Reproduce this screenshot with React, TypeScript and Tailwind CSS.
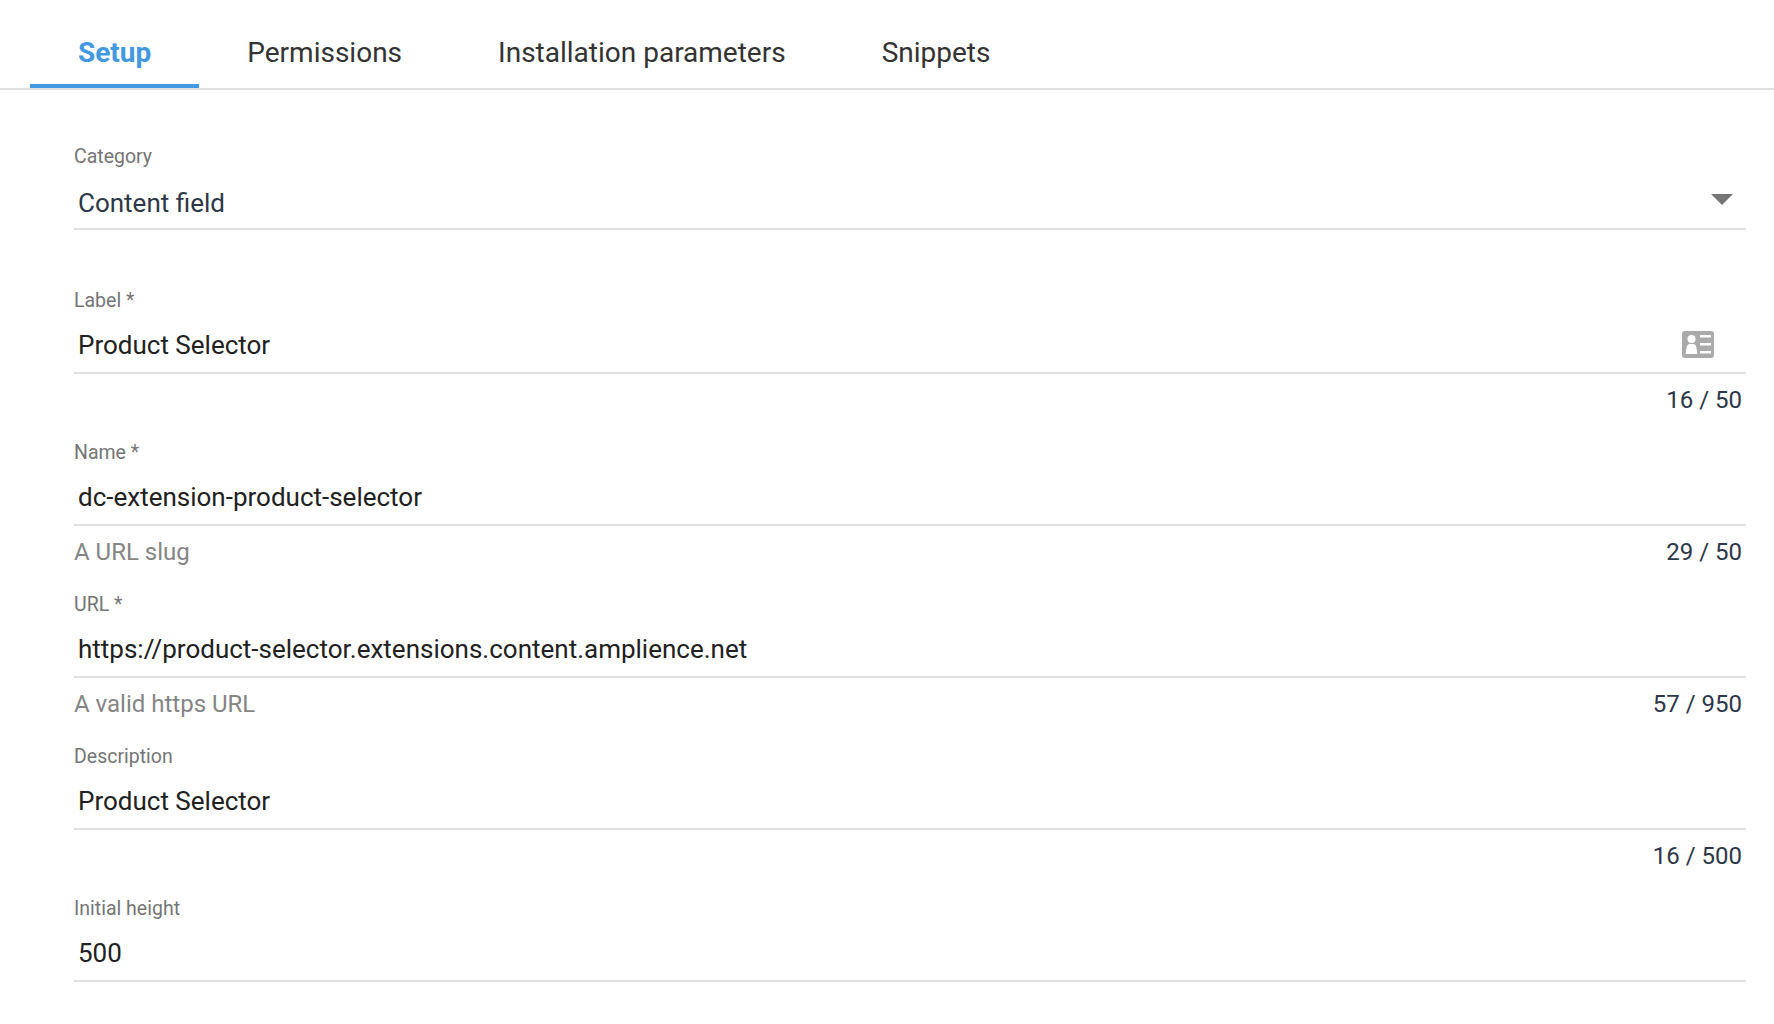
const tabs = ["Setup", "Permissions", "Installation parameters", "Snippets"];

function Field({
  label,
  value,
  helper,
  count,
  select,
  trailing,
}: {
  label: string;
  value: string;
  helper?: string;
  count?: string;
  select?: boolean;
  trailing?: React.ReactNode;
}) {
  return (
    <div>
      <div className="h-6 text-[19.5px] leading-[26px] text-[#757575]">{label}</div>
      <div className="h-[60px] flex items-end border-b-2 border-[#e0e0e0] box-content">
        <div
          className={`flex w-full items-center justify-between pl-[4px] ${select ? "h-[50px]" : "h-[54px]"}`}
        >
          <span className={`text-[26px] ${select ? "text-[#2d3748]" : "text-[#212121]"}`}>{value}</span>
          {trailing}
        </div>
      </div>
      {count && (
        <div className="flex h-[52px] items-center justify-between pr-[4px] text-[24px]">
          <span className="text-[#858585]">{helper}</span>
          <span className="text-[#2d3748]">{count}</span>
        </div>
      )}
    </div>
  );
}

export default function App() {
  return (
    <div className="min-h-screen bg-white font-['Roboto',sans-serif]">
      <div className="flex h-[90px] border-b-2 border-[#e0e0e0] pl-[30px]">
        {tabs.map((t, i) => (
          <div
            key={t}
            className={`h-[88px] px-12 pt-[36px] text-[28px] leading-[34px] ${
              i === 0 ? "border-b-4 border-[#4299e1] font-bold text-[#4299e1]" : "text-[#333333]"
            }`}
          >
            {t}
          </div>
        ))}
      </div>
      <div className="flex flex-col gap-[14px] pl-[74px] pr-[28px] pt-[54px]">
        <div className="mb-[44px]">
          <Field
            label="Category"
            value="Content field"
            select
            trailing={
              <svg width="22" height="11" viewBox="0 0 22 11" className="mr-[13px] mb-[7px]">
                <path d="M0 0h22L11 11z" fill="#757575" />
              </svg>
            }
          />
        </div>
        <Field
          label="Label *"
          value="Product Selector"
          count="16 / 50"
          trailing={
            <svg width="32" height="27" viewBox="0 0 32 27" className="mr-[32px] mb-[2px]">
              <rect width="32" height="27" rx="3" fill="#aaaaaa" />
              <circle cx="9.5" cy="8" r="4" fill="#ffffff" />
              <path d="M3.5 23l1-6q.5-4 3.5-4h3q3 0 3.5 4l1 6z" fill="#ffffff" />
              <path d="M18 4h11v2.5H18zM18 12h11v2.5H18zM18 20h11v2.5H18z" fill="#ffffff" />
            </svg>
          }
        />
        <Field label="Name *" value="dc-extension-product-selector" helper="A URL slug" count="29 / 50" />
        <Field
          label="URL *"
          value="https://product-selector.extensions.content.amplience.net"
          helper="A valid https URL"
          count="57 / 950"
        />
        <Field label="Description" value="Product Selector" count="16 / 500" />
        <Field label="Initial height" value="500" />
      </div>
    </div>
  );
}
